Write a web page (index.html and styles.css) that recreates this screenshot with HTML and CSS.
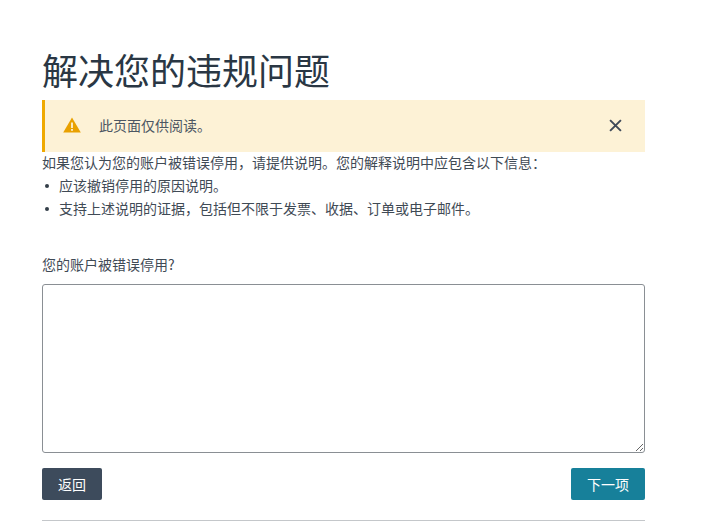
FILE: index.html
```html
<!DOCTYPE html>
<html lang="zh-CN">
<head>
    <title>解决您的违规问题</title>
    <meta charset="UTF-8">
    <meta name="viewport" content="width=device-width, initial-scale=1.0">
    <link rel="stylesheet" href="styles.css">
</head>
<body>
    <div class="page">
        <h1 class="title">解决您的违规问题</h1>

        <div class="alert">
            <svg class="alert-icon" width="18" height="16" viewBox="0 0 18 16">
                <path d="M9 0.5 L17.8 15.5 L0.2 15.5 Z" fill="#e9a100"/>
                <rect x="8.1" y="5.5" width="1.8" height="5.5" fill="#fdf2d6"/>
                <rect x="8.1" y="12" width="1.8" height="1.8" fill="#fdf2d6"/>
            </svg>
            <span class="alert-text">此页面仅供阅读。</span>
            <svg class="alert-close" width="13" height="13" viewBox="0 0 12 12">
                <path d="M1 1 L11 11 M11 1 L1 11" stroke="#3f4a59" stroke-width="1.8" fill="none"/>
            </svg>
        </div>

        <p class="intro">如果您认为您的账户被错误停用，请提供说明。您的解释说明中应包含以下信息：</p>
        <ul class="reasons">
            <li>应该撤销停用的原因说明。</li>
            <li>支持上述说明的证据，包括但不限于发票、收据、订单或电子邮件。</li>
        </ul>

        <label class="field-label" for="reason">您的账户被错误停用?</label>
        <textarea class="field" id="reason"></textarea>

        <div class="actions">
            <button class="button back">返回</button>
            <button class="button next">下一项</button>
        </div>

        <hr class="rule">
    </div>
</body>
</html>
```

FILE: styles.css
```css
html, body{
    margin: 0;
    padding: 0;
    background-color: #ffffff;
    color: #3f4a55;
    font-family: "Noto Sans CJK SC", "Liberation Sans", sans-serif;
    font-size: 14px;
}

.page{
    width: 603px;
    margin-left: 42px;
    padding-top: 44px;
}

.title{
    margin: 0 0 5px 0;
    height: 51px;
    font-size: 36px;
    line-height: 51px;
    font-weight: 400;
    color: #2a3744;
}

.alert{
    display: flex;
    align-items: center;
    height: 52px;
    padding: 0 23px 2px 18px;
    background-color: #fdf2d6;
    border-left: 3px solid #efa900;
    box-sizing: border-box;
}

.alert-text{
    margin-left: 18px;
    color: #4c5662;
}

.alert-close{
    margin-left: auto;
}

.intro{
    margin: 0;
    line-height: 21px;
}

.reasons{
    margin: 1px 0 0 0;
    padding: 0;
    list-style: none;
    line-height: 23px;
}

.reasons li{
    display: flex;
    align-items: center;
}

.reasons li::before{
    content: "";
    width: 4px;
    height: 4px;
    margin: 0 10px 0 3px;
    border-radius: 50%;
    background-color: #333e48;
}

.field-label{
    display: block;
    margin-top: 34px;
    line-height: 20px;
}

.field{
    display: block;
    width: 100%;
    height: 169px;
    margin-top: 10px;
    box-sizing: border-box;
    border: 1px solid #8a8f94;
    border-radius: 3px;
    background-color: #ffffff;
}

.actions{
    display: flex;
    justify-content: space-between;
    margin-top: 15px;
}

.button{
    height: 32px;
    border: none;
    border-radius: 2px;
    color: #ffffff;
    font-family: inherit;
    font-size: 14px;
}

.back{
    width: 60px;
    background-color: #3d4b5c;
}

.next{
    width: 74px;
    background-color: #17809a;
}

.rule{
    margin: 20px 0 0 0;
    border: none;
    border-top: 1px solid #c4c7ca;
}
```
